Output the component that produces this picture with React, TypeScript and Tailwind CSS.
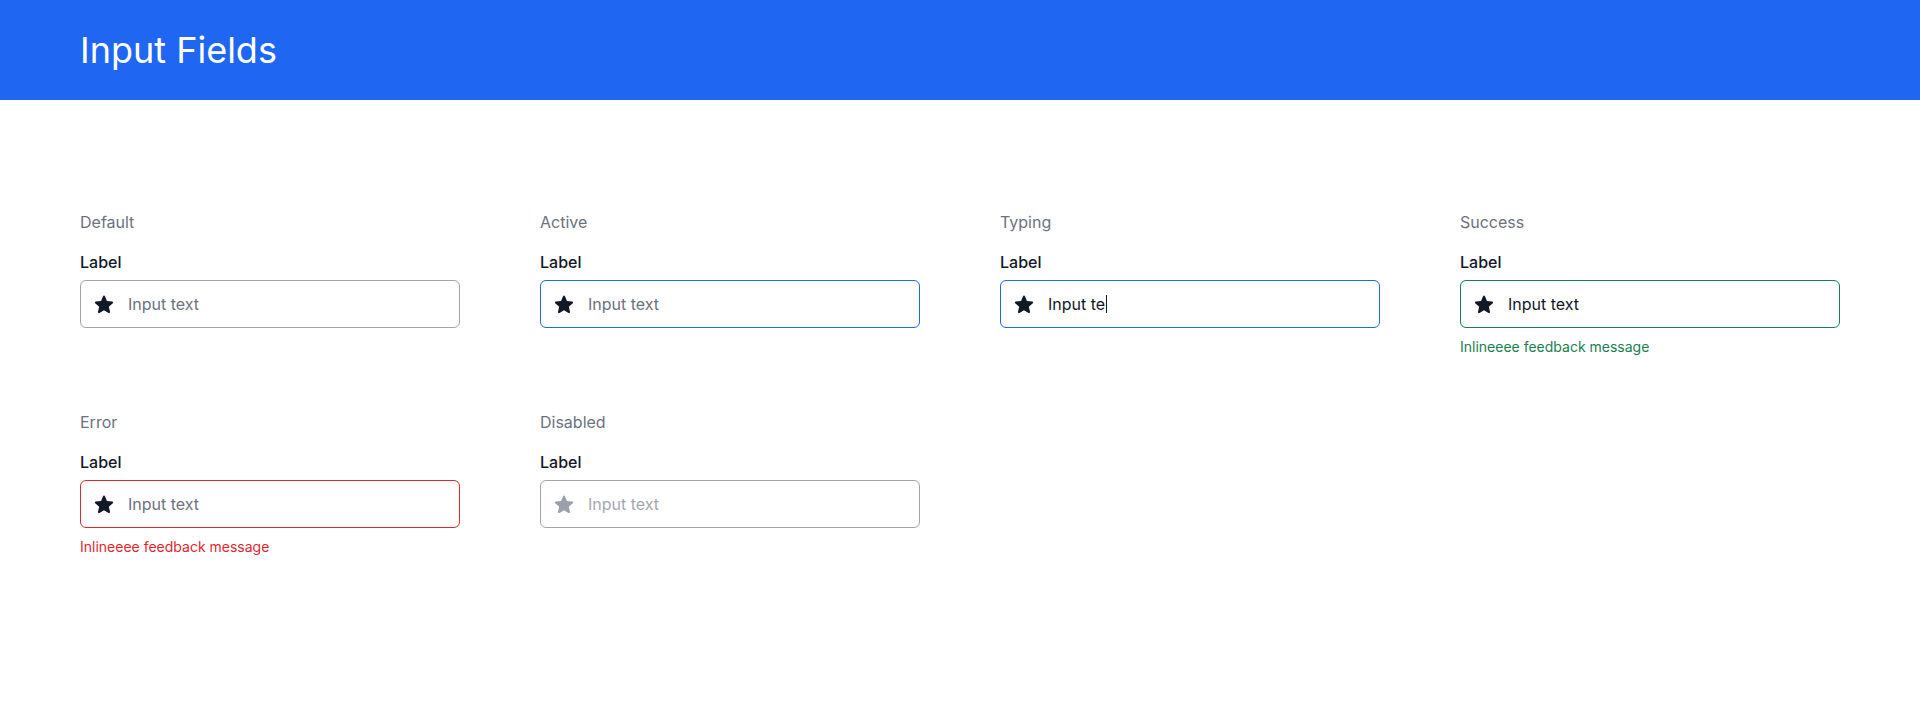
import React from "react";

type State = "default" | "active" | "typing" | "success" | "error" | "disabled";

const Star = ({ className }: { className: string }) => (
  <svg viewBox="0 0 20 20" fill="currentColor" className={className} aria-hidden="true">
    <path d="M10.868 2.884c-.321-.772-1.415-.772-1.736 0l-1.83 4.401-4.753.381c-.833.067-1.171 1.107-.536 1.651l3.62 3.102-1.106 4.637c-.194.813.691 1.456 1.405 1.02L10 15.591l4.069 2.485c.713.436 1.598-.207 1.404-1.02l-1.106-4.637 3.62-3.102c.635-.544.297-1.584-.536-1.65l-4.752-.382-1.831-4.401z" />
  </svg>
);

function Field({ title, state }: { title: string; state: State }) {
  const border =
    state === "active" || state === "typing"
      ? "border-[#1f66f2]"
      : state === "success"
      ? "border-[#17804f]"
      : state === "error"
      ? "border-[#e5262b]"
      : "border-[#9fa3b0]";
  const textColor =
    state === "typing" || state === "success"
      ? "text-[#111827]"
      : state === "disabled"
      ? "text-[#a3a7b3]"
      : "text-[#6b7280]";
  const starColor = state === "disabled" ? "text-[#9ca0ab]" : "text-[#111827]";
  return (
    <div className="flex flex-col w-[380px]">
      <div className="text-base leading-6 text-[#6b7280]">{title}</div>
      <div className="mt-4 text-base leading-6 font-medium text-[#111827]">Label</div>
      <div className={`mt-1.5 h-12 flex items-center pl-3 pr-4 rounded-md border bg-white ${border}`}>
        <Star className={`w-[22px] h-[22px] shrink-0 ${starColor}`} />
        <div className={`ml-[13px] text-base leading-6 flex items-center ${textColor}`}>
          {state === "typing" ? (
            <>
              <span>Input te</span>
              <span className="inline-block w-px h-[18px] bg-[#111827] ml-px" />
            </>
          ) : (
            <span>Input text</span>
          )}
        </div>
      </div>
      {state === "success" && (
        <div className="mt-[9px] text-sm leading-5 text-[#17804f]">Inlineeee feedback message</div>
      )}
      {state === "error" && (
        <div className="mt-[9px] text-sm leading-5 text-[#e5262b]">Inlineeee feedback message</div>
      )}
    </div>
  );
}

export default function App() {
  return (
    <div className="min-h-[720px] w-full bg-white font-['Inter',sans-serif]">
      <header className="h-[100px] bg-[#1f66f2] flex items-center px-20">
        <h1 className="text-[36px] leading-10 font-normal text-white">Input Fields</h1>
      </header>
      <main className="pt-[110px] px-20">
        <div className="grid grid-cols-[repeat(4,380px)] gap-x-20 gap-y-[53px] items-start">
          <Field title="Default" state="default" />
          <Field title="Active" state="active" />
          <Field title="Typing" state="typing" />
          <Field title="Success" state="success" />
          <Field title="Error" state="error" />
          <Field title="Disabled" state="disabled" />
        </div>
      </main>
    </div>
  );
}
